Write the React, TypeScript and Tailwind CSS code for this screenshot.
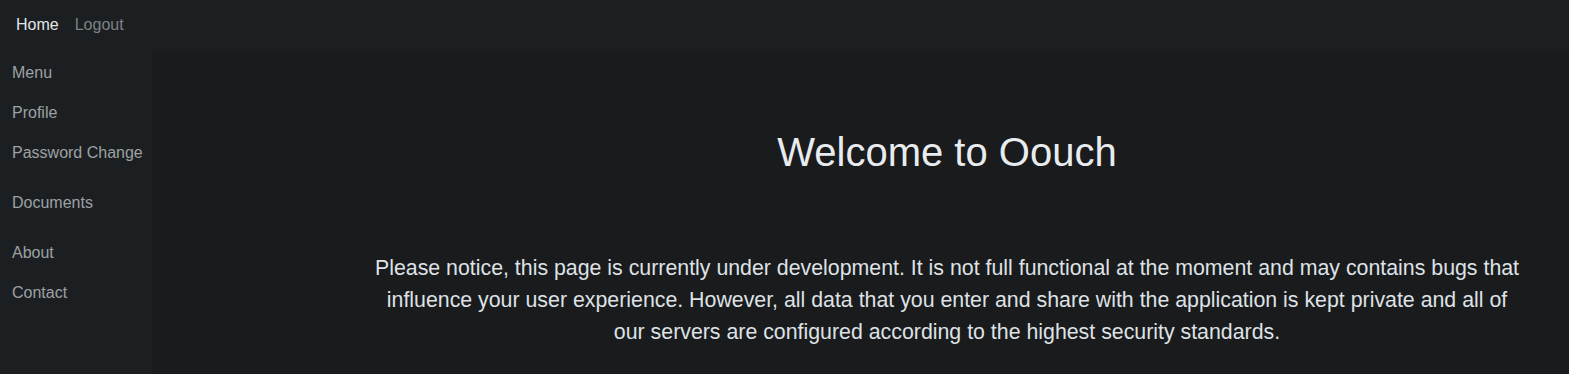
import React from "react";

export default function App() {
  const font = { fontFamily: '"Liberation Sans", Arial, sans-serif' };
  return (
    <div className="w-[1569px] h-[374px] overflow-hidden bg-[#1a1b1d] flex flex-col" style={font}>
      <nav className="h-[51px] bg-[#1c1f21] flex items-center px-4 pb-[2px] gap-[16px] text-[16px] shrink-0">
        <span className="text-[#e3e6e8]">Home</span>
        <span className="text-[#7d8286]">Logout</span>
      </nav>
      <div className="flex flex-1">
        <aside className="w-[152px] bg-[#1c1f21] text-[16px] text-[#9da1a5] pl-3 pt-[12px] shrink-0">
          <div className="h-[40px] leading-[20px]">Menu</div>
          <div className="h-[40px] leading-[20px]">Profile</div>
          <div className="h-[50px] leading-[20px]">Password Change</div>
          <div className="h-[50px] leading-[20px]">Documents</div>
          <div className="h-[40px] leading-[20px]">About</div>
          <div className="h-[40px] leading-[20px]">Contact</div>
        </aside>
        <main className="flex-1 pl-[222px]">
          <div className="w-[1146px] text-center">
            <h1 className="text-[40px] leading-[48px] text-[#e9ecef] mt-[77px]">Welcome to Oouch</h1>
            <p className="text-[21.33px] leading-[32px] text-[#dee2e6] mt-[76px]">
              Please notice, this page is currently under development. It is not full functional at the moment and may contains bugs that influence your user experience. However, all data that you enter and share with the application is kept private and all of our servers are configured according to the highest security standards.
            </p>
          </div>
        </main>
      </div>
    </div>
  );
}
